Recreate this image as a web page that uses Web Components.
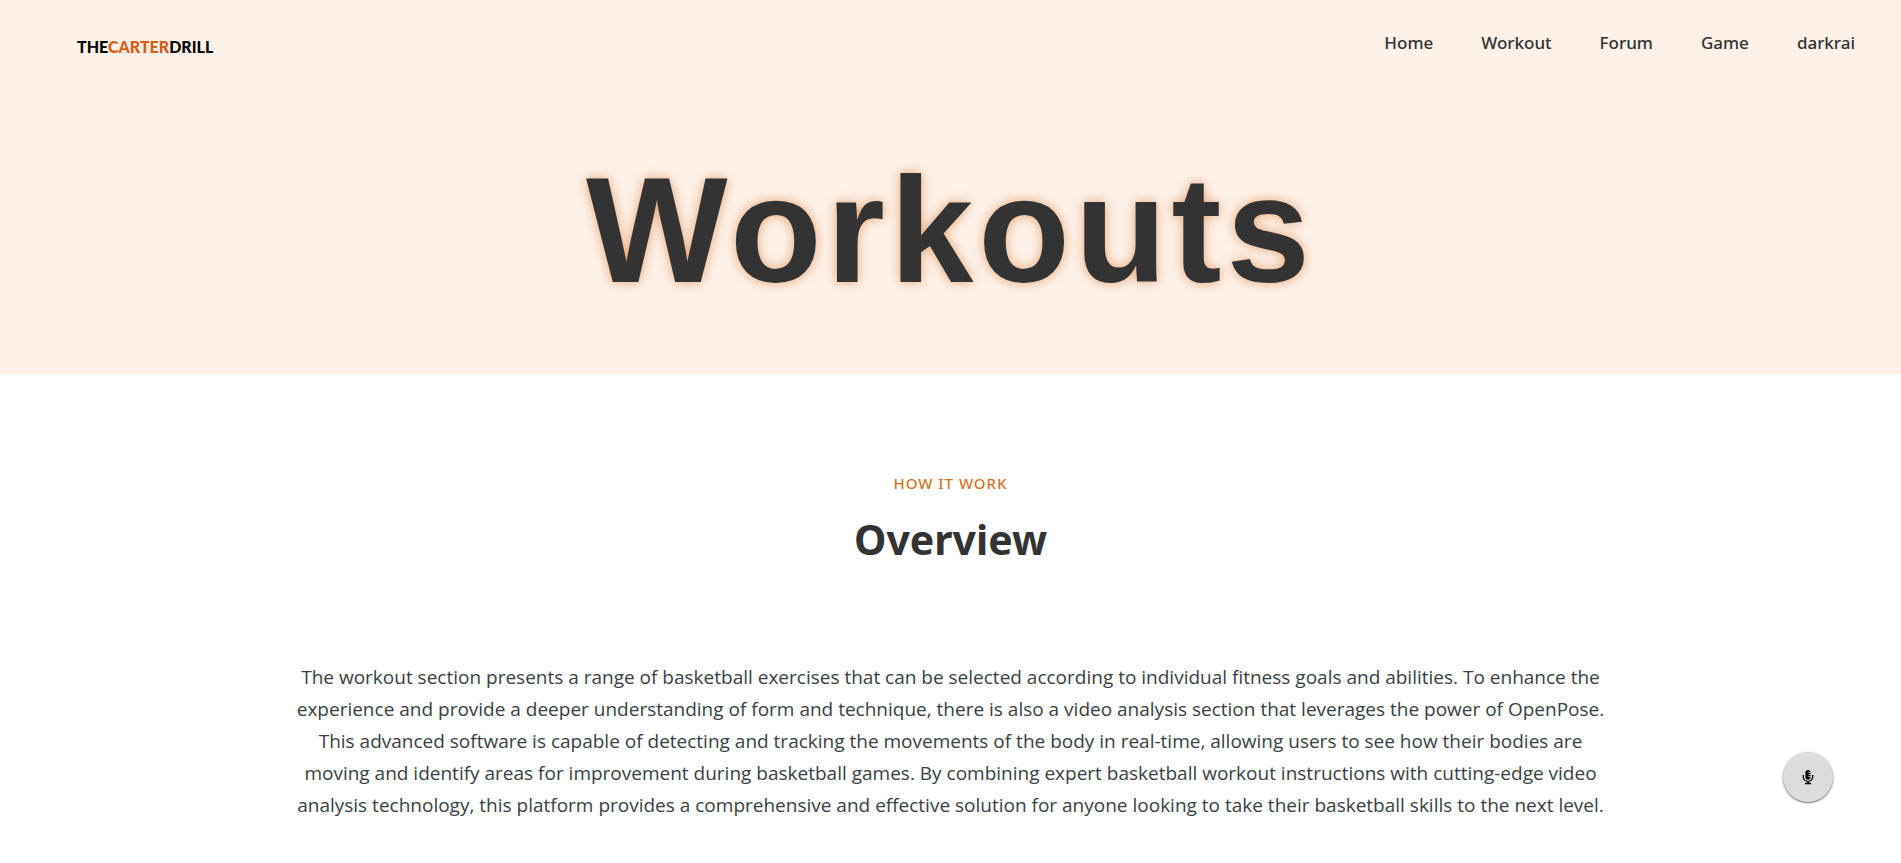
<!DOCTYPE html>
<html lang="en">
<head>
<meta charset="utf-8">
<meta name="viewport" content="width=device-width, initial-scale=1">
<title>Workouts</title>
<style>
  body { margin: 0; background: #fff; color: #333; font-family: "Noto Sans", "Open Sans", sans-serif; }
</style>
</head>
<body>
<drill-hero heading="Workouts">
  <drill-nav slot="nav"></drill-nav>
</drill-hero>
<main>
  <drill-section kicker="How it work" heading="Overview">
    The workout section presents a range of basketball exercises that can be selected according to individual fitness goals and abilities. To enhance the experience and provide a deeper understanding of form and technique, there is also a video analysis section that leverages the power of OpenPose. This advanced software is capable of detecting and tracking the movements of the body in real-time, allowing users to see how their bodies are moving and identify areas for improvement during basketball games. By combining expert basketball workout instructions with cutting-edge video analysis technology, this platform provides a comprehensive and effective solution for anyone looking to take their basketball skills to the next level.
  </drill-section>
</main>
<voice-button></voice-button>
<script>
  const define = (name, markup, setup) => customElements.define(name, class extends HTMLElement {
    constructor() {
      super();
      this.attachShadow({ mode: 'open' }).innerHTML = markup;
    }
    connectedCallback() { if (setup) setup(this, this.shadowRoot); }
  });

  define('drill-logo', `
    <style>
      :host { display: block; }
      a { color: #000; text-decoration: none; font: 900 16px/24px Lato, sans-serif; }
      span { color: #d95b16; }
    </style>
    <a href="#">THE<span>CARTER</span>DRILL</a>`);

  define('drill-nav', `
    <style>
      :host { display: flex; justify-content: space-between; align-items: flex-start; padding: 29px 46px 0 77px; }
      drill-logo { padding-top: 6px; }
      nav { display: flex; gap: 48px; }
      a { color: #333; text-decoration: none; font-size: 17px; line-height: 27px; font-weight: 500; }
    </style>
    <drill-logo></drill-logo>
    <nav aria-label="Main">
      <a href="#">Home</a><a href="#">Workout</a><a href="#">Forum</a><a href="#">Game</a><a href="#">darkrai</a>
    </nav>`);

  define('drill-hero', `
    <style>
      :host { display: block; background: #fdf1e8; padding-bottom: 45px; }
      h1 {
        margin: 71px 0 0; text-align: center; color: #333;
        font: 700 150px/200px "Liberation Sans", Arial, sans-serif; letter-spacing: 5px;
        text-shadow: 0 0 12px rgba(215, 115, 40, .6);
      }
    </style>
    <header><slot name="nav"></slot><h1></h1></header>`,
    (el, root) => { root.querySelector('h1').textContent = el.getAttribute('heading'); });

  define('drill-section', `
    <style>
      :host { display: block; box-sizing: border-box; max-width: 1320px; margin: 0 auto; padding: 96px 0 32px; text-align: center; }
      .kicker { margin: 0; color: #d2752a; font-size: 15px; line-height: 24px; font-weight: 500; letter-spacing: 1px; text-transform: uppercase; }
      h2 { margin: 16px 0 94px; color: #333; font-size: 41px; line-height: 56px; font-weight: 700; }
      .text { margin: 0; color: #3a3f44; font-family: "Open Sans", "Noto Sans", sans-serif; font-size: 19px; line-height: 32px; font-weight: 400; }
    </style>
    <section aria-labelledby="title">
      <p class="kicker"></p><h2 id="title"></h2><p class="text"><slot></slot></p>
    </section>`,
    (el, root) => {
      root.querySelector('.kicker').textContent = el.getAttribute('kicker');
      root.querySelector('h2').textContent = el.getAttribute('heading');
    });

  define('voice-button', `
    <style>
      :host { display: block; position: fixed; right: 68px; bottom: 61px; }
      button {
        display: flex; align-items: center; justify-content: center; width: 50px; height: 50px; padding: 0;
        border: 0; border-radius: 50%; background: #dcdcdc; color: #000; box-shadow: 0 1px 2px rgba(0, 0, 0, .6); cursor: pointer;
      }
    </style>
    <button type="button" aria-label="Voice command">
      <svg width="12" height="16" viewBox="0 0 12 16" aria-hidden="true">
        <rect x="3.400" y="1" width="5.200" height="9.500" rx="2.600"/>
        <path d="M6.500 3.500H9M6.500 5.500H9M6.500 7.500H9" stroke="#dcdcdc" stroke-width=".8"/>
        <path d="M1.300 6v2a4.700 4.300 0 0 0 9.400 0V6M6 12v2M3 14.500h6" fill="none" stroke="#000" stroke-width="1.300"/>
      </svg>
    </button>`);
</script>
</body>
</html>
